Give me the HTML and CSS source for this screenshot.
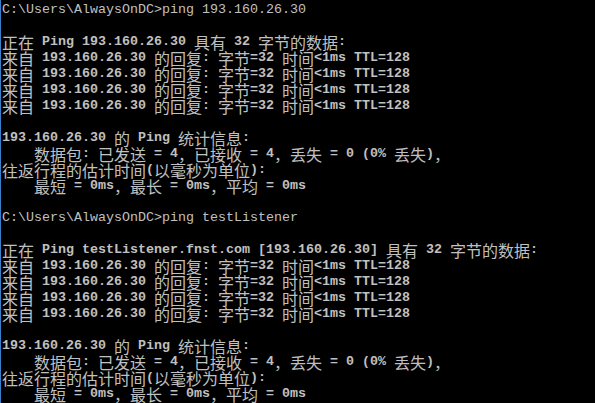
FILE: index.html
```html
<!DOCTYPE html>
<html lang="zh-CN">
<head>
  <meta charset="UTF-8">
  <meta name="viewport" content="width=device-width, initial-scale=1.0">
  <title>命令提示符 - ping</title>
  <link rel="stylesheet" href="styles.css">
</head>
<body>
  <div class="console">
    <!-- first ping -->
    <div class="line cmd">C:\Users\AlwaysOnDC&gt;ping 193.160.26.30</div>
    <div class="line"></div>
    <div class="line"><span class="zh">正在</span> Ping 193.160.26.30 <span class="zh">具有</span> 32 <span class="zh">字节的数据</span>:</div>
    <div class="line"><span class="zh">来自</span> 193.160.26.30 <span class="zh">的回复</span>: <span class="zh">字节</span>=32 <span class="zh">时间</span>&lt;1ms TTL=128</div>
    <div class="line"><span class="zh">来自</span> 193.160.26.30 <span class="zh">的回复</span>: <span class="zh">字节</span>=32 <span class="zh">时间</span>&lt;1ms TTL=128</div>
    <div class="line"><span class="zh">来自</span> 193.160.26.30 <span class="zh">的回复</span>: <span class="zh">字节</span>=32 <span class="zh">时间</span>&lt;1ms TTL=128</div>
    <div class="line"><span class="zh">来自</span> 193.160.26.30 <span class="zh">的回复</span>: <span class="zh">字节</span>=32 <span class="zh">时间</span>&lt;1ms TTL=128</div>
    <div class="line"></div>
    <div class="line">193.160.26.30 <span class="zh">的</span> Ping <span class="zh">统计信息</span>:</div>
    <div class="line">    <span class="zh">数据包</span>: <span class="zh">已发送</span> = 4<span class="zh">，已接收</span> = 4<span class="zh">，丢失</span> = 0 (0% <span class="zh">丢失</span>)<span class="zh">，</span></div>
    <div class="line"><span class="zh">往返行程的估计时间</span>(<span class="zh">以毫秒为单位</span>):</div>
    <div class="line">    <span class="zh">最短</span> = 0ms<span class="zh">，最长</span> = 0ms<span class="zh">，平均</span> = 0ms</div>
    <div class="line"></div>

    <!-- second ping -->
    <div class="line cmd">C:\Users\AlwaysOnDC&gt;ping testListener</div>
    <div class="line"></div>
    <div class="line"><span class="zh">正在</span> Ping testListener.fnst.com [193.160.26.30] <span class="zh">具有</span> 32 <span class="zh">字节的数据</span>:</div>
    <div class="line"><span class="zh">来自</span> 193.160.26.30 <span class="zh">的回复</span>: <span class="zh">字节</span>=32 <span class="zh">时间</span>&lt;1ms TTL=128</div>
    <div class="line"><span class="zh">来自</span> 193.160.26.30 <span class="zh">的回复</span>: <span class="zh">字节</span>=32 <span class="zh">时间</span>&lt;1ms TTL=128</div>
    <div class="line"><span class="zh">来自</span> 193.160.26.30 <span class="zh">的回复</span>: <span class="zh">字节</span>=32 <span class="zh">时间</span>&lt;1ms TTL=128</div>
    <div class="line"><span class="zh">来自</span> 193.160.26.30 <span class="zh">的回复</span>: <span class="zh">字节</span>=32 <span class="zh">时间</span>&lt;1ms TTL=128</div>
    <div class="line"></div>
    <div class="line">193.160.26.30 <span class="zh">的</span> Ping <span class="zh">统计信息</span>:</div>
    <div class="line">    <span class="zh">数据包</span>: <span class="zh">已发送</span> = 4<span class="zh">，已接收</span> = 4<span class="zh">，丢失</span> = 0 (0% <span class="zh">丢失</span>)<span class="zh">，</span></div>
    <div class="line"><span class="zh">往返行程的估计时间</span>(<span class="zh">以毫秒为单位</span>):</div>
    <div class="line">    <span class="zh">最短</span> = 0ms<span class="zh">，最长</span> = 0ms<span class="zh">，平均</span> = 0ms</div>
  </div>
</body>
</html>
```

FILE: styles.css
```css
html,
body {
  margin: 0;
  padding: 0;
  background-color: #000;
  height: 100%;
}

.console {
  min-height: 100%;
  box-sizing: border-box;
  border-left: 1px solid #3a80c8;
  padding: 2px 0 0 1px;
  color: #c0c0c0;
  font-family: "Liberation Mono", "Noto Sans CJK SC", monospace;
  font-size: 13.333px;
  font-weight: bold;
}

/* every row is one 16px console cell high */
.line {
  height: 16px;
  line-height: 16px;
  white-space: pre;
}

.cmd {
  font-weight: normal;
}

/* CJK glyphs take two 8px cells */
.zh {
  font-family: "Noto Sans CJK SC", sans-serif;
  font-size: 16px;
  font-weight: normal;
  line-height: 16px;
  vertical-align: top;
}
```
